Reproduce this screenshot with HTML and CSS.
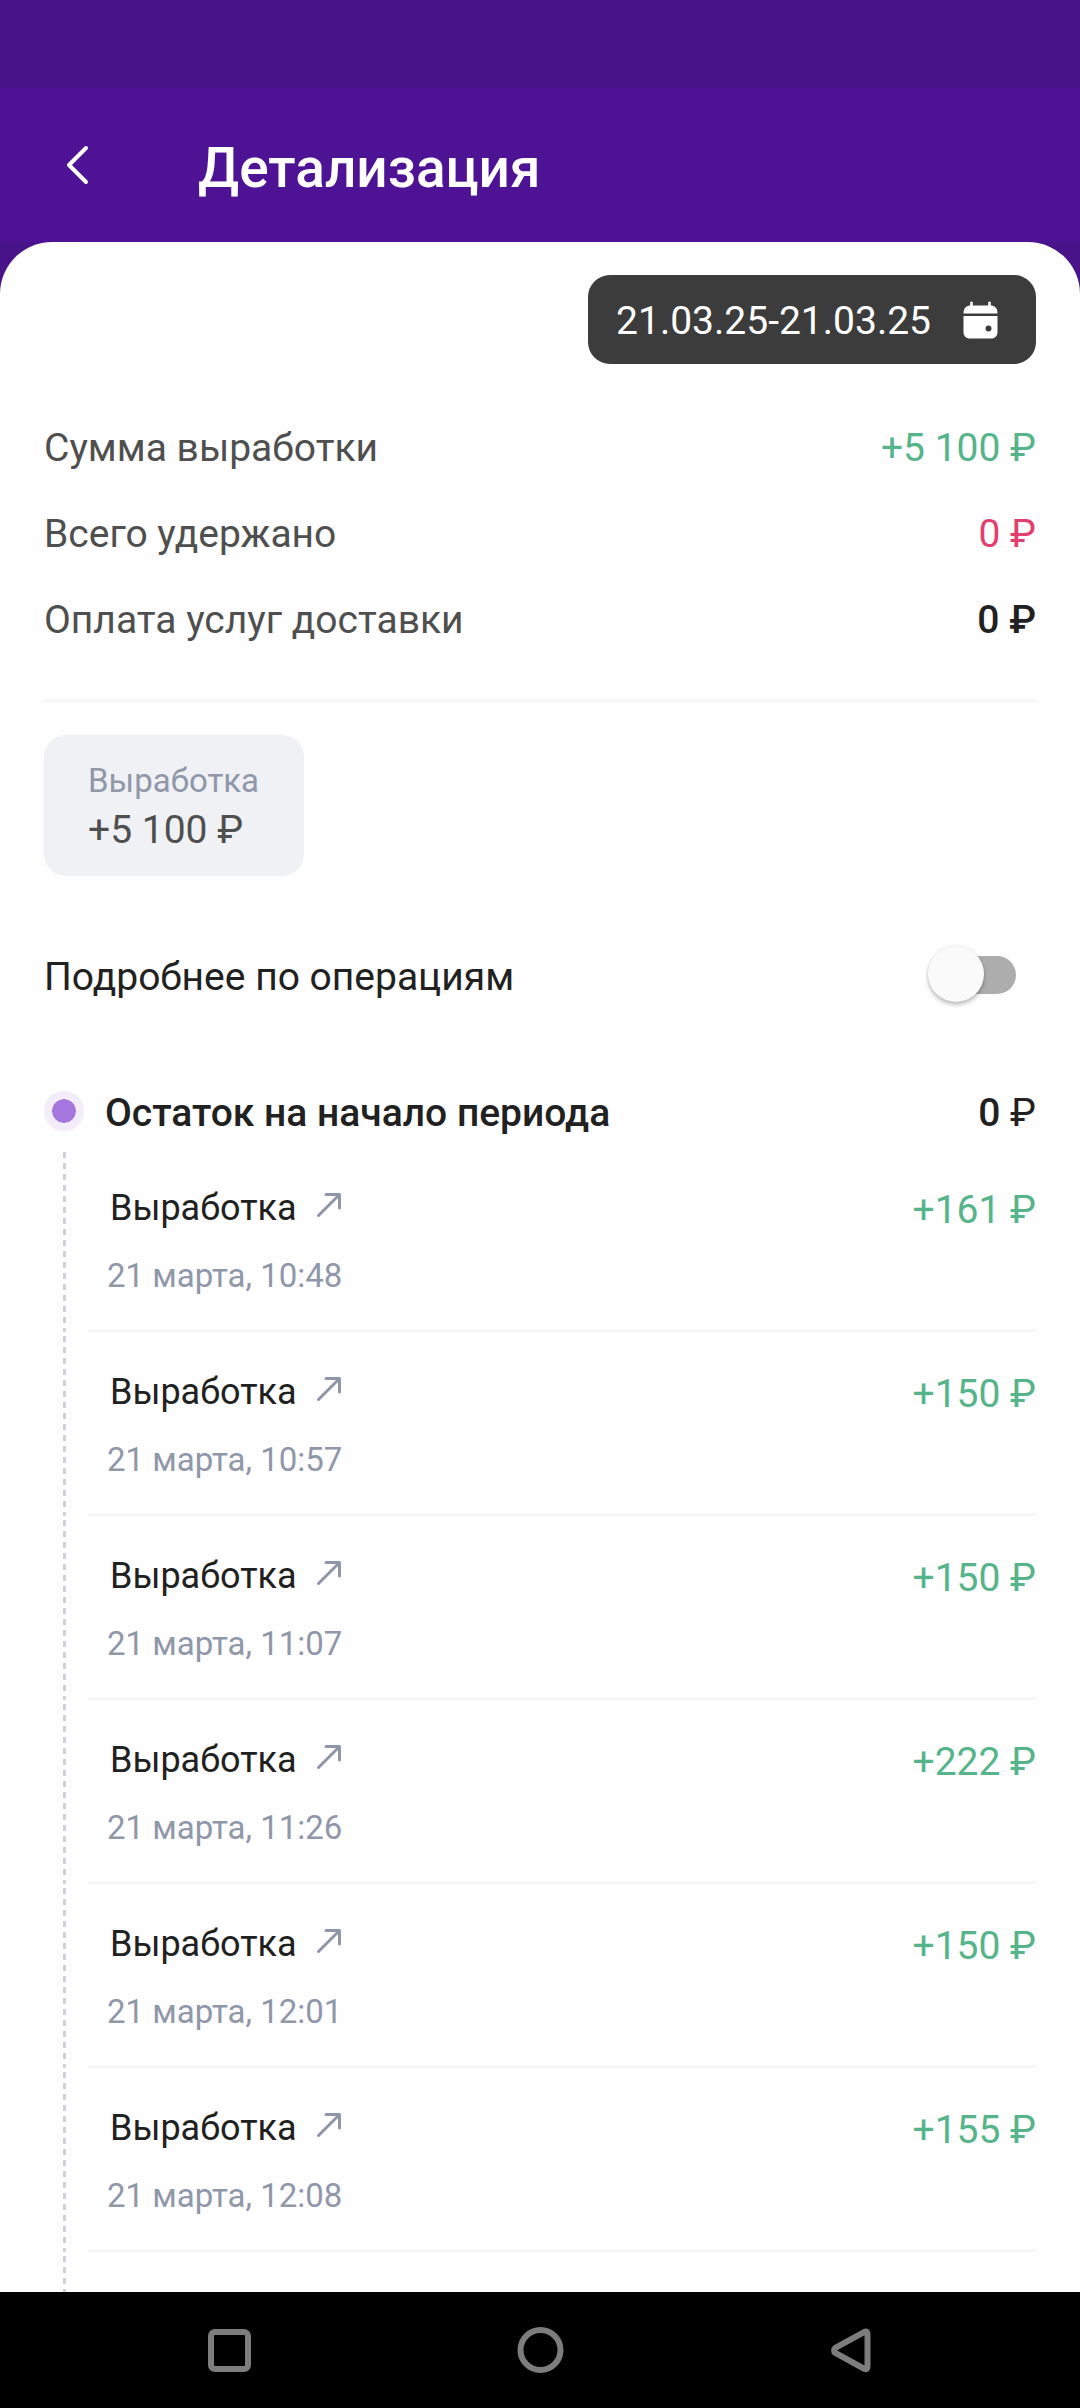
FILE: index.html
```html
<!DOCTYPE html>
<html lang="ru">
<head>
<meta charset="utf-8">
<meta name="viewport" content="width=device-width, initial-scale=1">
<title>Детализация</title>
<link rel="stylesheet" href="styles.css">
</head>
<body>
<div class="status-bar"></div>
<header class="app-bar">
  <button class="back" type="button" aria-label="Назад">
    <svg width="24" height="40" viewBox="0 0 24 40" fill="none" stroke="#fff" stroke-width="4" stroke-linecap="round" stroke-linejoin="round"><path d="M21 3 4 20l17 17"/></svg>
  </button>
  <h1 class="title">Детализация</h1>
</header>
<main class="sheet">
  <button class="period" type="button">
    <span class="period-text">21.03.25-21.03.25</span>
    <svg width="36" height="38" viewBox="0 0 36 38" fill="#fff"><path d="M8.500 1.800v5M26.500 1.800v5" stroke="#fff" stroke-width="2.600" stroke-linecap="round"/><path d="M.5 12.500C.5 7 3.200 4.500 8 4.500h19c4.800 0 7.500 2.500 7.500 8z"/><path fill-rule="evenodd" d="M.5 15h34v16c0 4-2.500 6.500-6.500 6.500H7C3 37.500.5 35 .5 31zM25.500 24.500a3 3 0 1 0 0 6 3 3 0 0 0 0-6z"/></svg>
  </button>
  <dl class="summary">
    <div class="row"><dt>Сумма выработки</dt><dd class="plus">+5 100 ₽</dd></div>
    <div class="row"><dt>Всего удержано</dt><dd class="minus">0 ₽</dd></div>
    <div class="row"><dt>Оплата услуг доставки</dt><dd class="total">0 ₽</dd></div>
  </dl>
  <hr class="divider">
  <section class="card">
    <span class="card-label">Выработка</span>
    <span class="card-value">+5 100 ₽</span>
  </section>
  <div class="detail-row">
    <label for="details">Подробнее по операциям</label>
    <input class="switch" id="details" type="checkbox" role="switch">
  </div>
  <section class="timeline">
    <div class="timeline-head">
      <span class="dot"></span>
      <h2>Остаток на начало периода</h2>
      <span class="balance"><b>0</b> ₽</span>
    </div>
    <ul class="operations">
      <li class="operation"><div class="info"><a class="name" href="#op1">Выработка <svg class="arrow" viewBox="0 0 24 24"><path d="M1.500 22.500 22 2M9 1.500h13.500V15"/></svg></a><time>21 марта, 10:48</time></div><span class="amount">+161 ₽</span></li>
      <li class="operation"><div class="info"><a class="name" href="#op2">Выработка <svg class="arrow" viewBox="0 0 24 24"><path d="M1.500 22.500 22 2M9 1.500h13.500V15"/></svg></a><time>21 марта, 10:57</time></div><span class="amount">+150 ₽</span></li>
      <li class="operation"><div class="info"><a class="name" href="#op3">Выработка <svg class="arrow" viewBox="0 0 24 24"><path d="M1.500 22.500 22 2M9 1.500h13.500V15"/></svg></a><time>21 марта, 11:07</time></div><span class="amount">+150 ₽</span></li>
      <li class="operation"><div class="info"><a class="name" href="#op4">Выработка <svg class="arrow" viewBox="0 0 24 24"><path d="M1.500 22.500 22 2M9 1.500h13.500V15"/></svg></a><time>21 марта, 11:26</time></div><span class="amount">+222 ₽</span></li>
      <li class="operation"><div class="info"><a class="name" href="#op5">Выработка <svg class="arrow" viewBox="0 0 24 24"><path d="M1.500 22.500 22 2M9 1.500h13.500V15"/></svg></a><time>21 марта, 12:01</time></div><span class="amount">+150 ₽</span></li>
      <li class="operation"><div class="info"><a class="name" href="#op6">Выработка <svg class="arrow" viewBox="0 0 24 24"><path d="M1.500 22.500 22 2M9 1.500h13.500V15"/></svg></a><time>21 марта, 12:08</time></div><span class="amount">+155 ₽</span></li>
    </ul>
    <div class="rail-tail"></div>
  </section>
</main>
<nav class="system-nav">
  <button type="button" aria-label="Недавние"><svg width="48" height="48" viewBox="0 0 48 48"><rect x="6" y="6" width="37" height="37" rx="4"/></svg></button>
  <button type="button" aria-label="Домой"><svg width="48" height="48" viewBox="0 0 48 48"><circle cx="24.500" cy="24" r="20"/></svg></button>
  <button type="button" aria-label="Назад"><svg width="48" height="48" viewBox="0 0 48 48"><path d="M37.500 5.800 8.800 21.600a3.200 3.200 0 0 0 0 5.600L37.500 43q3 1 3-2.500V8.300q0-3.500-3-2.500z"/></svg></button>
</nav>
</body>
</html>
```

FILE: styles.css
```css
* {
  box-sizing: border-box;
}

body {
  margin: 0;
  min-height: 100vh;
  display: flex;
  flex-direction: column;
  background: #481289;
  color: #212121;
  font: 400 39px/46px Roboto, "Noto Sans", sans-serif;
}

button {
  border: 0;
  padding: 0;
  background: none;
  color: inherit;
  font: inherit;
}

svg {
  display: block;
}

h1,
h2,
dl,
dd,
ul {
  margin: 0;
  padding: 0;
}

.status-bar {
  height: 88px;
}

.app-bar {
  display: flex;
  align-items: center;
  height: 154px;
  padding: 0 44px;
  background: #4e1395;
}

.back {
  display: flex;
  align-items: center;
  justify-content: center;
  width: 66px;
  height: 66px;
  margin-right: 88px;
}

.title {
  padding-top: 6px;
  color: #fff;
  font-size: 55px;
  line-height: 64px;
  font-weight: 500;
}

.sheet {
  flex: 1;
  display: flex;
  flex-direction: column;
  padding: 33px 44px 0;
  background: #fefefe;
  border-radius: 52px 52px 0 0;
}

.period {
  align-self: flex-end;
  display: flex;
  align-items: center;
  gap: 32px;
  height: 89px;
  padding: 0 37px 0 28px;
  border-radius: 22px;
  background: #3c3c3c;
  color: #fff;
}

.period-text {
  padding-top: 3px;
}

.summary {
  display: grid;
  gap: 40px;
  margin-top: 61px;
}

.row {
  display: flex;
  justify-content: space-between;
  color: #4f4f4f;
}

.plus,
.amount {
  color: #55b48a;
}

.minus {
  color: #e23f70;
}

.total {
  color: #212121;
  font-weight: 500;
}

.divider {
  width: 100%;
  height: 3px;
  margin: 56px 0 33px;
  border: 0;
  background: #f5f7f7;
}

.card {
  align-self: flex-start;
  display: grid;
  gap: 1px;
  padding: 22px 45px 22px 44px;
  border-radius: 22px;
  background: #f0f1f4;
  color: #4f4f4f;
  line-height: 48px;
}

.card-label {
  color: #8f97a9;
  font-size: 33px;
}

.detail-row {
  display: flex;
  justify-content: space-between;
  margin-top: 70px;
  padding-right: 20px;
  line-height: 62px;
}

.switch {
  appearance: none;
  position: relative;
  width: 88px;
  height: 56px;
  margin: 0;
}

.switch::before {
  content: "";
  position: absolute;
  inset: 10px 0 8px 8px;
  border-radius: 19px;
  background: #adadad;
}

.switch::after {
  content: "";
  position: absolute;
  left: 0;
  top: 0;
  width: 56px;
  height: 56px;
  border-radius: 50%;
  background: #fafafa;
  box-shadow: 0 3px 4px rgba(0, 0, 0, 0.24), 0 0 3px rgba(0, 0, 0, 0.1);
}

.switch:checked::after {
  left: auto;
  right: 0;
}

.timeline {
  flex: 1;
  display: flex;
  flex-direction: column;
  margin-top: 83px;
}

.timeline-head {
  display: flex;
  margin-bottom: 17px;
  line-height: 44px;
}

.timeline-head h2 {
  flex: 1;
  font-size: 39px;
  font-weight: 500;
}

.dot {
  width: 40px;
  height: 40px;
  margin-right: 21px;
  border: 8px solid #f3ecfb;
  border-radius: 50%;
  background: #a575e0;
  background-clip: padding-box;
}

.balance b {
  font-weight: 500;
}

.operations {
  list-style: none;
}

.operation,
.rail-tail {
  background: repeating-linear-gradient(#cdd1d9 0 6px, transparent 6px 11px) 19px 0 / 3px 100% no-repeat;
}

.operation {
  position: relative;
  display: flex;
  justify-content: space-between;
  margin-bottom: 4px;
  padding: 34px 0 36px 63px;
}

.operation::after {
  content: "";
  position: absolute;
  inset: auto 0 0 44px;
  height: 3px;
  background: #f5f7f7;
}

.info {
  display: grid;
  gap: 26px;
}

.name {
  display: flex;
  align-items: center;
  gap: 20px;
  padding: 0 3px;
  color: #212121;
  font-size: 36px;
  line-height: 44px;
  text-decoration: none;
}

.arrow {
  width: 24px;
  height: 24px;
  margin-bottom: 6px;
  fill: none;
  stroke: #8f97a9;
  stroke-width: 3;
  stroke-linecap: round;
  stroke-linejoin: round;
}

.info time {
  color: #8f97a9;
  font-size: 33px;
  line-height: 40px;
}

.amount {
  line-height: 48px;
}

.rail-tail {
  flex: 1;
  min-height: 36px;
}

.system-nav {
  display: flex;
  justify-content: center;
  gap: 263px;
  padding: 34px 0;
  background: #000;
}

.system-nav svg {
  fill: none;
  stroke: #7d7d7d;
  stroke-width: 6;
}
```
